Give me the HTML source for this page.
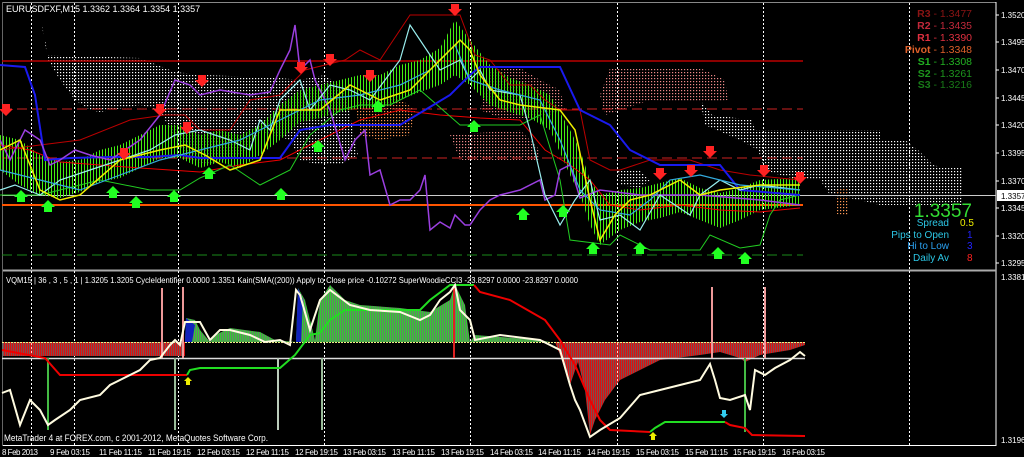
<!DOCTYPE html>
<html><head><meta charset="utf-8"><style>
html,body{margin:0;padding:0;background:#000;}
svg{display:block;}
text{font-family:"Liberation Sans",sans-serif;}
</style></head><body>
<svg width="1024" height="457" viewBox="0 0 1024 457" xmlns="http://www.w3.org/2000/svg">
<defs>
<pattern id="dw" width="3" height="3" patternUnits="userSpaceOnUse"><rect width="1.2" height="1.2" fill="#fff"/></pattern>
<pattern id="dr" width="3" height="3" patternUnits="userSpaceOnUse"><rect width="1.2" height="1.2" fill="#e88"/></pattern>
<pattern id="do" width="3" height="3" patternUnits="userSpaceOnUse"><rect width="1.2" height="1.2" fill="#f95"/></pattern>
<pattern id="vg" width="2" height="4" patternUnits="userSpaceOnUse"><rect width="1" height="4" fill="#3c3"/><rect x="1" width="1" height="4" fill="#cfc" opacity=".5"/></pattern>
<pattern id="vr" width="2" height="4" patternUnits="userSpaceOnUse"><rect width="1" height="4" fill="#d11"/><rect x="1" width="1" height="4" fill="#f99" opacity=".5"/></pattern>
<pattern id="bars" width="3" height="4" patternUnits="userSpaceOnUse"><rect width="1" height="4" fill="#4e1"/></pattern>
</defs>
<rect width="1024" height="457" fill="#000"/>
<rect x="2" y="2" width="994" height="1" fill="#888"/>
<line x1="996" y1="2" x2="996" y2="446" stroke="#fff"/>
<line x1="2" y1="270.5" x2="996" y2="270.5" stroke="#aaa" stroke-width="2"/>
<line x1="2" y1="445.5" x2="996" y2="445.5" stroke="#fff"/>
<line x1="2.5" y1="2" x2="2.5" y2="446" stroke="#666"/>
<g stroke="#fff" stroke-dasharray="2,2" stroke-width="1">
<line x1="31.5" y1="3" x2="31.5" y2="445"/><line x1="74.5" y1="3" x2="74.5" y2="445"/>
<line x1="178.5" y1="3" x2="178.5" y2="445"/><line x1="324.5" y1="3" x2="324.5" y2="445"/>
<line x1="470.5" y1="3" x2="470.5" y2="445"/><line x1="617.5" y1="3" x2="617.5" y2="445"/>
<line x1="763.5" y1="3" x2="763.5" y2="445"/><line x1="909.5" y1="3" x2="909.5" y2="445"/>
</g>
<polygon fill="url(#dw)" points="40,15 48,55 140,58 175,72 205,75 280,78 300,80 325,75 345,90 358,155 340,165 320,165 300,160 290,140 262,132 240,155 210,165 190,160 175,140 160,110 140,105 100,112 90,110 75,100 60,80 48,60"/>
<polygon fill="url(#dw)" points="700,100 712,115 752,120 755,130 880,130 880,140 905,140 918,150 933,165 945,168 962,168 962,205 880,205 860,200 830,195 820,180 800,180 780,175 765,170 758,150 740,140 705,125"/>
<polygon fill="url(#dr)" points="610,68 700,68 725,80 728,100 700,102 650,100 620,110 605,115 600,95"/>
<polygon fill="url(#dr)" points="490,70 520,68 540,80 560,90 565,110 540,118 500,118 480,110"/>
<polygon fill="url(#do)" points="355,100 395,95 415,110 410,135 380,140 360,135"/>
<polygon fill="url(#dr)" points="450,135 520,130 540,150 540,160 460,160"/>
<polygon fill="url(#do)" points="835,190 848,188 848,215 836,214"/>
<polygon fill="url(#dw)" points="618,170 640,170 650,180 640,188 620,185"/>
<line x1="2" y1="61" x2="803" y2="61" stroke="#b00" stroke-width="1.5"/>
<line x1="2" y1="109" x2="803" y2="109" stroke="#c22" stroke-dasharray="10,5"/>
<line x1="2" y1="158" x2="803" y2="158" stroke="#c22" stroke-dasharray="10,5"/>
<line x1="2" y1="195.5" x2="996" y2="195.5" stroke="#ccc"/>
<line x1="2" y1="205" x2="803" y2="205" stroke="#f50" stroke-width="2"/>
<line x1="2" y1="255" x2="803" y2="255" stroke="#1a8a1a" stroke-dasharray="10,5"/>
<!-- green bars band -->
<polygon fill="url(#bars)" points="0,135 20,140 40,155 60,162 80,160 100,150 120,145 140,135 160,125 180,125 200,135 220,130 240,135 260,125 280,105 300,90 320,85 340,80 360,75 380,75 400,65 420,60 440,48 455,20 470,40 490,65 510,78 530,85 550,95 570,130 580,150 590,180 600,195 620,190 640,188 660,183 680,178 700,188 720,193 740,188 760,180 800,178 800,205 760,210 740,220 720,228 700,220 680,212 660,218 640,222 620,230 600,245 590,225 580,195 570,175 550,130 530,118 510,112 490,105 470,85 455,75 440,85 420,92 400,100 380,108 360,108 340,112 320,118 300,122 280,140 260,155 240,168 220,162 200,168 180,158 160,158 140,168 120,178 100,182 80,192 60,198 40,195 20,185 0,170"/>
<polyline fill="none" stroke="#b00" stroke-width="1" points="0,150 40,145 80,140 130,120 165,115 185,115 200,130 230,130 250,100 280,95 305,70 345,60 360,50 380,60 410,15 460,15 475,55 490,60 510,85 530,85 545,100 560,110 580,110 590,160 610,170 620,170 650,160 690,160 720,170 750,175 800,180"/>
<polyline fill="none" stroke="#e00" stroke-width="1" points="0,145 30,150 60,162 100,165 140,168 170,170 200,172 240,165 280,160 320,140 360,120 400,110 440,115 480,118 520,120 545,150 570,165 590,180 610,205 640,210 680,205 720,210 760,212 800,208"/>
<polyline fill="none" stroke="#22cc22" stroke-width="1" points="0,195 40,195 60,190 100,180 150,190 180,190 200,178 230,165 260,185 290,170 310,135 340,110 360,105 390,105 420,90 460,125 520,125 540,115 560,180 570,240 610,245 620,235 650,250 700,250 710,235 740,248 760,245 770,215 780,200 800,195"/>
<polyline fill="none" stroke="#1a1aee" stroke-width="2" points="0,65 25,67 35,95 45,160 70,158 110,157 150,157 180,155 200,158 280,158 300,130 330,125 400,125 450,95 470,75 480,67 560,67 580,110 610,125 630,150 660,165 720,165 740,190 800,195"/>
<polyline fill="none" stroke="#9b3fe0" stroke-width="1.5" points="0,140 10,160 25,130 40,140 50,165 60,160 75,150 90,155 110,160 140,140 160,115 175,80 190,85 200,95 220,90 250,95 270,92 280,70 290,50 295,25 300,70 310,60 315,80 330,110 345,160 355,140 365,130 370,175 380,170 390,205 400,200 410,200 420,190 425,175 430,230 440,222 450,228 455,215 465,225 470,225 480,210 490,200 500,195 520,190 540,180 545,200 555,195 560,170 570,165 580,198 600,190 640,195 700,195 760,200 800,205"/>
<polyline fill="none" stroke="#9ee" stroke-width="1.2" points="0,190 15,185 40,195 60,180 90,170 120,160 150,150 175,135 200,130 230,140 250,150 260,120 270,130 280,100 300,80 310,110 330,85 350,90 370,100 400,60 410,25 420,40 440,70 460,60 470,80 480,70 490,90 520,95 530,130 545,195 560,225 575,200 590,180 600,220 620,215 640,230 660,195 690,215 700,195 720,180 740,190 760,185 800,190"/>
<polyline fill="none" stroke="#3ad" stroke-width="1.2" points="0,170 40,180 80,190 120,175 160,160 200,150 240,140 280,120 320,100 360,95 400,85 430,70 455,45 470,80 500,90 540,100 560,140 580,190 600,210 630,215 650,200 670,180 700,175 740,185 800,190"/>
<polyline fill="none" stroke="#ee0" stroke-width="1.5" points="0,150 20,140 40,190 60,200 80,195 120,160 160,150 185,145 205,155 230,170 260,160 280,110 320,110 350,85 380,100 410,90 440,60 460,40 470,50 480,75 500,100 520,105 560,110 575,130 590,200 600,240 615,215 630,200 650,195 680,180 700,195 720,190 760,185 800,185"/>
<g fill="#f22">
<path d="M451,4 h8 v5 h3 l-7,7 l-7,-7 h3z"/><path d="M326,54 h8 v5 h3 l-7,7 l-7,-7 h3z"/><path d="M366,70 h8 v5 h3 l-7,7 l-7,-7 h3z"/>
<path d="M156,104 h8 v5 h3 l-7,7 l-7,-7 h3z"/><path d="M183,122 h8 v5 h3 l-7,7 l-7,-7 h3z"/><path d="M120,148 h8 v5 h3 l-7,7 l-7,-7 h3z"/>
<path d="M2,104 h8 v5 h3 l-7,7 l-7,-7 h3z"/><path d="M297,62 h8 v5 h3 l-7,7 l-7,-7 h3z"/><path d="M198,75 h8 v5 h3 l-7,7 l-7,-7 h3z"/>
<path d="M706,146 h8 v5 h3 l-7,7 l-7,-7 h3z"/><path d="M656,168 h8 v5 h3 l-7,7 l-7,-7 h3z"/><path d="M687,165 h8 v5 h3 l-7,7 l-7,-7 h3z"/><path d="M760,165 h8 v5 h3 l-7,7 l-7,-7 h3z"/><path d="M796,172 h8 v5 h3 l-7,7 l-7,-7 h3z"/>
</g>
<g fill="#2f2">
<path d="M21,190 l7,7 h-3 v5 h-8 v-5 h-3z"/><path d="M48,200 l7,7 h-3 v5 h-8 v-5 h-3z"/><path d="M113,186 l7,7 h-3 v5 h-8 v-5 h-3z"/>
<path d="M136,196 l7,7 h-3 v5 h-8 v-5 h-3z"/><path d="M174,190 l7,7 h-3 v5 h-8 v-5 h-3z"/><path d="M209,167 l7,7 h-3 v5 h-8 v-5 h-3z"/>
<path d="M281,188 l7,7 h-3 v5 h-8 v-5 h-3z"/><path d="M318,140 l7,7 h-3 v5 h-8 v-5 h-3z"/><path d="M378,100 l7,7 h-3 v5 h-8 v-5 h-3z"/>
<path d="M474,120 l7,7 h-3 v5 h-8 v-5 h-3z"/><path d="M523,208 l7,7 h-3 v5 h-8 v-5 h-3z"/><path d="M593,242 l7,7 h-3 v5 h-8 v-5 h-3z"/>
<path d="M640,242 l7,7 h-3 v5 h-8 v-5 h-3z"/><path d="M718,247 l7,7 h-3 v5 h-8 v-5 h-3z"/><path d="M745,252 l7,7 h-3 v5 h-8 v-5 h-3z"/><path d="M563,205 l7,7 h-3 v5 h-8 v-5 h-3z"/>
</g>
<text x="6" y="12" font-size="9" fill="#fff">EURUSDFXF,M15  1.3362 1.3364 1.3354 1.3357</text>
<g font-size="10.5" text-anchor="end">
<text x="972" y="17" fill="#8b1414"><tspan font-weight="bold">R3</tspan> - 1.3477</text>
<text x="972" y="29" fill="#c2283a"><tspan font-weight="bold">R2</tspan> - 1.3435</text>
<text x="972" y="41" fill="#e03040"><tspan font-weight="bold">R1</tspan> - 1.3390</text>
<text x="972" y="53" fill="#e0602a"><tspan font-weight="bold">Pivot</tspan> - 1.3348</text>
<text x="972" y="65" fill="#22b022"><tspan font-weight="bold">S1</tspan> - 1.3308</text>
<text x="972" y="77" fill="#1d951d"><tspan font-weight="bold">S2</tspan> - 1.3261</text>
<text x="972" y="88" fill="#187a18"><tspan font-weight="bold">S3</tspan> - 1.3216</text>
</g>
<text x="972" y="217" font-size="19" fill="#33dd33" text-anchor="end">1.3357</text>
<g font-size="10">
<text x="949" y="226" fill="#2cc7e6" text-anchor="end">Spread</text><text x="960" y="226" fill="#ee0">0.5</text>
<text x="949" y="238" fill="#2cc7e6" text-anchor="end">Pips to Open</text><text x="967" y="238" fill="#22f">1</text>
<text x="949" y="249" fill="#2aa0f0" text-anchor="end">Hi to Low</text><text x="967" y="249" fill="#22f">3</text>
<text x="949" y="261" fill="#2cc7e6" text-anchor="end">Daily Av</text><text x="967" y="261" fill="#f22">8</text>
</g>
<g font-size="8" fill="#fff">
<text x="1001" y="18">1.3520</text><text x="1001" y="45">1.3495</text><text x="1001" y="73">1.3470</text>
<text x="1001" y="101">1.3445</text><text x="1001" y="128">1.3420</text><text x="1001" y="156">1.3395</text>
<text x="1001" y="184">1.3370</text><text x="1001" y="211">1.3345</text><text x="1001" y="239">1.3320</text>
<text x="1001" y="266">1.3295</text>
<text x="1001" y="280">1.3381</text><text x="1001" y="443">1.3196</text>
</g>
<rect x="997" y="190" width="27" height="11" fill="#fff"/>
<text x="1001" y="199" font-size="8" fill="#000">1.3357</text>
<g stroke="#fff"><line x1="996" y1="15" x2="999" y2="15"/><line x1="996" y1="42" x2="999" y2="42"/><line x1="996" y1="70" x2="999" y2="70"/><line x1="996" y1="98" x2="999" y2="98"/><line x1="996" y1="125" x2="999" y2="125"/><line x1="996" y1="153" x2="999" y2="153"/><line x1="996" y1="181" x2="999" y2="181"/><line x1="996" y1="208" x2="999" y2="208"/><line x1="996" y1="236" x2="999" y2="236"/><line x1="996" y1="263" x2="999" y2="263"/></g>

<rect x="3" y="342" width="182" height="14" fill="url(#vr)"/>
<polygon fill="url(#vg)" points="185,342 186,318 195,320 200,330 210,342 215,335 230,328 260,332 275,340 296,342 298,288 305,300 315,340 320,300 330,285 345,300 360,305 400,308 430,312 450,300 455,285 465,305 470,342 475,335 540,340 550,342"/>
<polygon fill="#12b" points="185,342 186,318 195,325 192,342"/>
<polygon fill="#12b" points="296,342 298,288 303,300 301,342"/>
<polygon fill="url(#vr)" points="555,342 560,355 570,385 578,362 585,390 590,435 595,420 605,400 620,380 640,370 660,360 700,355 720,352 740,358 745,362 760,355 790,350 805,345 805,342"/>
<line x1="2" y1="342.5" x2="805" y2="342.5" stroke="#ee8" stroke-dasharray="2,1" stroke-width="1"/>
<line x1="2" y1="358.5" x2="805" y2="358.5" stroke="#ddd" stroke-width="1.5"/>
<g stroke-width="2">
<line x1="162" y1="288" x2="162" y2="358" stroke="#e99"/><line x1="183" y1="287" x2="183" y2="358" stroke="#e99"/>
<line x1="712" y1="287" x2="712" y2="358" stroke="#e99"/><line x1="765" y1="287" x2="765" y2="358" stroke="#e99"/>
<line x1="454" y1="285" x2="454" y2="358" stroke="#d22"/>
<line x1="48" y1="358" x2="48" y2="430" stroke="#4b4"/><line x1="175" y1="358" x2="175" y2="430" stroke="#9b9"/>
<line x1="278" y1="358" x2="278" y2="430" stroke="#bcb"/><line x1="322" y1="358" x2="322" y2="430" stroke="#9b9"/>
<line x1="745" y1="358" x2="745" y2="432" stroke="#4b4"/>
</g>
<polyline fill="none" stroke="#e00" stroke-width="2" points="2,350 45,358 60,375 187,375"/>
<polyline fill="none" stroke="#2d2" stroke-width="2" points="187,375 190,370 200,368 280,368 295,355 310,335 320,333 330,320 345,310 420,310 430,300 450,285 474,285"/>
<polyline fill="none" stroke="#e00" stroke-width="2" points="474,285 480,292 510,300 545,320 560,340 575,365 590,400 600,420 610,430 650,432"/>
<polyline fill="none" stroke="#2d2" stroke-width="2" points="650,432 655,428 665,422 725,422"/>
<polyline fill="none" stroke="#e00" stroke-width="2" points="725,422 730,425 745,428 752,435 805,436"/>
<polyline fill="none" stroke="#fffbe0" stroke-width="2" points="2,393 10,390 20,425 30,400 40,410 48,425 55,420 70,410 80,400 100,395 110,385 120,380 130,375 140,370 150,360 160,358 170,345 175,340 180,345 185,322 200,322 210,340 220,330 230,330 250,335 265,342 280,340 290,345 296,290 300,295 310,330 320,300 330,290 350,305 370,310 400,312 420,320 430,315 440,300 450,292 455,285 460,310 470,320 475,340 500,335 540,340 560,350 570,385 575,400 580,410 590,437 600,430 620,418 640,395 660,390 680,385 700,380 710,364 715,380 720,398 730,400 745,395 750,410 755,370 765,375 775,368 790,360 800,352 805,356"/>
<path d="M188,377 l4,4 h-2 v4 h-4 v-4 h-2z" fill="#ee0"/>
<path d="M653,432 l4,4 h-2 v4 h-4 v-4 h-2z" fill="#ee0"/>
<path d="M724,418 l-4,-4 h2 v-4 h4 v4 h2z" fill="#3ce"/>
<text x="6" y="283" font-size="8" fill="#fff" textLength="572" lengthAdjust="spacingAndGlyphs">VQM15 |  36 , 3 , 5 , 1  |  1.3205 1.3205  CycleIdentifier 0.0000 1.3351  Kain(SMA((200)) Apply to Close price -0.10272  SuperWoodieCCI3 -23.8297 0.0000 -23.8297 0.0000</text>
<text x="4" y="441" font-size="9" fill="#fff" textLength="264" lengthAdjust="spacingAndGlyphs">MetaTrader 4 at FOREX.com, c 2001-2012, MetaQuotes Software Corp.</text>
<g font-size="8" fill="#fff">
<text x="2" y="455" textLength="36">8 Feb 2013</text><text x="50" y="455" textLength="40">9 Feb 03:15</text><text x="99" y="455" textLength="43">11 Feb 11:15</text>
<text x="148" y="455" textLength="43">11 Feb 19:15</text><text x="197" y="455" textLength="43">12 Feb 03:15</text><text x="246" y="455" textLength="43">12 Feb 11:15</text>
<text x="295" y="455" textLength="43">12 Feb 19:15</text><text x="343" y="455" textLength="43">13 Feb 03:15</text><text x="392" y="455" textLength="43">13 Feb 11:15</text>
<text x="441" y="455" textLength="43">13 Feb 19:15</text><text x="490" y="455" textLength="43">14 Feb 03:15</text><text x="538" y="455" textLength="43">14 Feb 11:15</text>
<text x="587" y="455" textLength="43">14 Feb 19:15</text><text x="636" y="455" textLength="43">15 Feb 03:15</text><text x="685" y="455" textLength="43">15 Feb 11:15</text>
<text x="733" y="455" textLength="43">15 Feb 19:15</text><text x="782" y="455" textLength="43">16 Feb 03:15</text>
</g>
</svg>
</body></html>
